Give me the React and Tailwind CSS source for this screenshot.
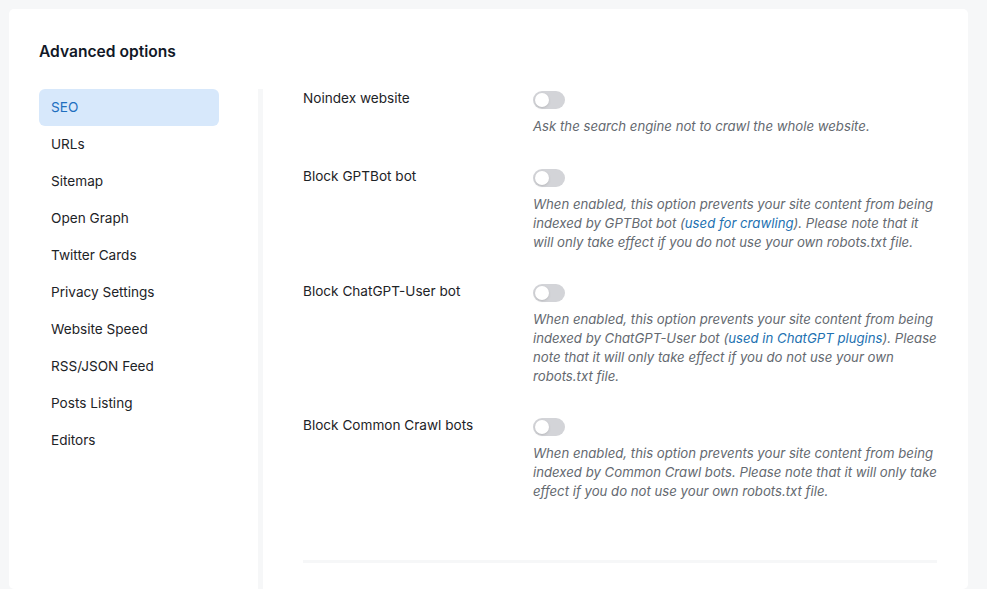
import { useState } from 'react'

const MENU = ['SEO', 'URLs', 'Sitemap', 'Open Graph', 'Twitter Cards', 'Privacy Settings', 'Website Speed', 'RSS/JSON Feed', 'Posts Listing', 'Editors']

const OPTIONS = [
  {
    id: 'noindex',
    label: 'Noindex website',
    desc: <>Ask the search engine not to crawl the whole website.</>,
  },
  {
    id: 'gptbot',
    label: 'Block GPTBot bot',
    desc: (
      <>
        When enabled, this option prevents your site content from being indexed by GPTBot bot (
        <a href="#" className="text-[#2271b1]">used for crawling</a>
        ). Please note that it will only take effect if you do not use your own robots.txt file.
      </>
    ),
  },
  {
    id: 'chatgpt',
    label: 'Block ChatGPT-User bot',
    desc: (
      <>
        When enabled, this option prevents your site content from being indexed by ChatGPT-User bot (
        <a href="#" className="text-[#2271b1]">used in ChatGPT plugins</a>
        ). Please note that it will only take effect if you do not use your own robots.txt file.
      </>
    ),
  },
  {
    id: 'ccbot',
    label: 'Block Common Crawl bots',
    desc: (
      <>
        When enabled, this option prevents your site content from being indexed by Common Crawl bots. Please note that it will only take effect if you do not use your own robots.txt file.
      </>
    ),
  },
]

function Toggle({ on, onChange }) {
  return (
    <button
      onClick={onChange}
      className={`relative block w-8 h-[18px] rounded-full transition-colors ${on ? 'bg-[#2271b1]' : 'bg-[#d3d4d8]'}`}
    >
      <span className={`absolute top-[2px] w-[14px] h-[14px] rounded-full bg-white shadow-sm transition-all ${on ? 'left-[16px]' : 'left-[2px]'}`} />
    </button>
  )
}

export default function App() {
  const [active, setActive] = useState('SEO')
  const [values, setValues] = useState({})

  return (
    <main className="min-h-screen bg-[#f6f7f8] pt-[9px] pl-[9px] pr-[19px] font-['Inter',sans-serif] text-[#1d2327]">
      <div className="bg-white rounded-[5px] h-[580px] overflow-hidden">
        <h2 className="pt-[31px] pl-[30px] text-[15.6px] font-semibold text-[#111827] leading-6">Advanced options</h2>

        <div className="flex mt-[25px] pl-[30px] h-full">
          {/* left menu */}
          <nav className="w-[180px] flex flex-col">
            {MENU.map(m => (
              <button
                key={m}
                onClick={() => setActive(m)}
                className={`h-[37px] px-3 text-left text-[13.6px] rounded-md ${m === active ? 'bg-[#d7e8fb] text-[#1f6fbf]' : 'text-[#1d2327]'}`}
              >
                {m}
              </button>
            ))}
          </nav>

          <div className="ml-[39px] w-[5px] bg-[#f6f7f8]" />

          {/* settings */}
          <section className="ml-[40px] w-[634px] flex flex-col">
            {OPTIONS.map(o => (
              <div key={o.id} className="flex mb-[30px] first:mb-[31px]">
                <div className="w-[230px] text-[13.6px] leading-[18px]">{o.label}</div>
                <div className="w-[404px] pt-[2px]">
                  <Toggle
                    on={!!values[o.id]}
                    onChange={() => setValues(v => ({ ...v, [o.id]: !v[o.id] }))}
                  />
                  <p className="mt-2 text-[13.2px] italic leading-[19px] text-[#646970]">{o.desc}</p>
                </div>
              </div>
            ))}
            <div className="mt-[29px] h-[3px] bg-[#f6f7f8]" />
          </section>
        </div>
      </div>
    </main>
  )
}
